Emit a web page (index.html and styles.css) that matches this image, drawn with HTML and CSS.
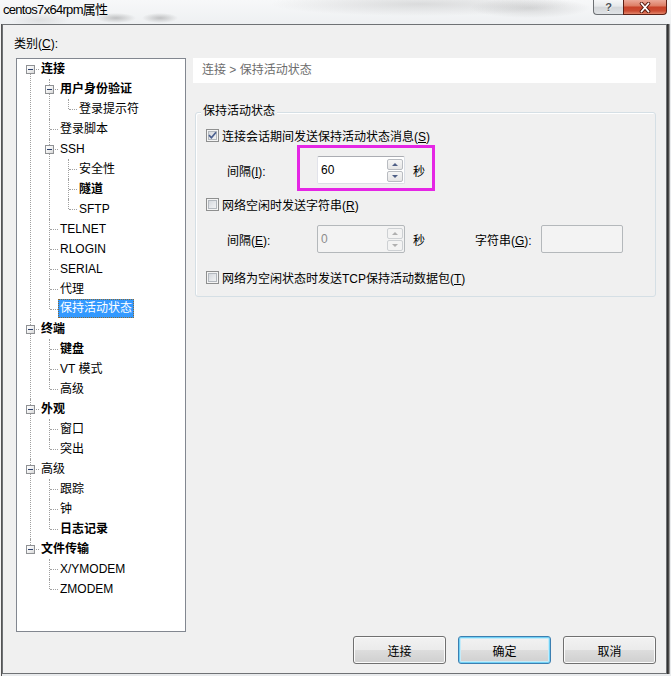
FILE: index.html
```html
<!DOCTYPE html>
<html lang="zh-CN">
<head>
<meta charset="utf-8">
<title>centos7x64rpm属性</title>
<link rel="stylesheet" href="styles.css">
</head>
<body>
<div class="window">
  <div class="titlebar">
    <div class="title">centos7x64rpm属性</div>
    <div class="caption">
      <div class="cap-help">?</div>
      <div class="cap-close">
        <svg width="14" height="11" viewBox="0 0 14 11"><path d="M3.5 1.5 L10.5 9.5 M10.5 1.5 L3.5 9.5" stroke="#5a1d12" stroke-width="3.6" stroke-linecap="round" fill="none"/><path d="M3.5 1.5 L10.5 9.5 M10.5 1.5 L3.5 9.5" stroke="#ffffff" stroke-width="1.8" stroke-linecap="round" fill="none"/></svg>
      </div>
    </div>
  </div>
  <div class="client">
    <div class="cat-label">类别(<u>C</u>):</div>
    <div class="main">
      <div class="tree-box">
        <ul class="tree">
          <li class="first">
            <div class="row"><span class="exp"></span><span class="b">连接</span></div>
            <ul>
              <li>
                <div class="row"><span class="exp"></span><span class="b">用户身份验证</span></div>
                <ul>
                  <li class="last"><div class="row"><span>登录提示符</span></div></li>
                </ul>
              </li>
              <li><div class="row"><span>登录脚本</span></div></li>
              <li>
                <div class="row"><span class="exp"></span><span>SSH</span></div>
                <ul>
                  <li><div class="row"><span>安全性</span></div></li>
                  <li><div class="row"><span class="b">隧道</span></div></li>
                  <li class="last"><div class="row"><span>SFTP</span></div></li>
                </ul>
              </li>
              <li><div class="row"><span>TELNET</span></div></li>
              <li><div class="row"><span>RLOGIN</span></div></li>
              <li><div class="row"><span>SERIAL</span></div></li>
              <li><div class="row"><span>代理</span></div></li>
              <li class="last"><div class="row"><span class="sel">保持活动状态</span></div></li>
            </ul>
          </li>
          <li>
            <div class="row"><span class="exp"></span><span class="b">终端</span></div>
            <ul>
              <li><div class="row"><span class="b">键盘</span></div></li>
              <li><div class="row"><span>VT 模式</span></div></li>
              <li class="last"><div class="row"><span>高级</span></div></li>
            </ul>
          </li>
          <li>
            <div class="row"><span class="exp"></span><span class="b">外观</span></div>
            <ul>
              <li><div class="row"><span>窗口</span></div></li>
              <li class="last"><div class="row"><span>突出</span></div></li>
            </ul>
          </li>
          <li>
            <div class="row"><span class="exp"></span><span>高级</span></div>
            <ul>
              <li><div class="row"><span>跟踪</span></div></li>
              <li><div class="row"><span>钟</span></div></li>
              <li class="last"><div class="row"><span class="b">日志记录</span></div></li>
            </ul>
          </li>
          <li class="last">
            <div class="row"><span class="exp"></span><span class="b">文件传输</span></div>
            <ul>
              <li><div class="row"><span>X/YMODEM</span></div></li>
              <li class="last"><div class="row"><span>ZMODEM</span></div></li>
            </ul>
          </li>
        </ul>
      </div>
      <div class="panel">
        <div class="crumb">连接 &gt; 保持活动状态</div>
        <div class="group">
          <div class="legend">保持活动状态</div>
          <div class="row-cb r1">
            <span class="cb"><svg width="9" height="9" viewBox="0 0 9 9"><path d="M1 4.2 L3.4 6.8 L8 1.3" stroke="#4a5f8f" stroke-width="1.7" fill="none"/></svg></span>
            <span>连接会话期间发送保持活动状态消息(<u>S</u>)</span>
          </div>
          <div class="row-field r2">
            <span class="flabel">间隔(<u>I</u>):</span>
            <div class="spinbox">
              <span class="val">60</span>
              <div class="spin"><span class="sb"><i class="up"></i></span><span class="sb"><i class="down"></i></span></div>
            </div>
            <span class="unit">秒</span>
            <div class="highlight"></div>
          </div>
          <div class="row-cb r3">
            <span class="cb"></span>
            <span>网络空闲时发送字符串(<u>R</u>)</span>
          </div>
          <div class="row-field r4">
            <span class="flabel">间隔(<u>E</u>):</span>
            <div class="spinbox disabled">
              <span class="val">0</span>
              <div class="spin"><span class="sb"><i class="up"></i></span><span class="sb"><i class="down"></i></span></div>
            </div>
            <span class="unit">秒</span>
            <span class="slabel">字符串(<u>G</u>):</span>
            <div class="textbox disabled"></div>
          </div>
          <div class="row-cb r5">
            <span class="cb"></span>
            <span>网络为空闲状态时发送TCP保持活动数据包(<u>T</u>)</span>
          </div>
        </div>
      </div>
    </div>
    <div class="buttons">
      <button class="btn">连接</button>
      <button class="btn default">确定</button>
      <button class="btn">取消</button>
    </div>
  </div>
</div>
</body>
</html>
```

FILE: styles.css
```css
* { box-sizing: border-box; }
html, body { margin: 0; padding: 0; }
body {
  width: 671px;
  height: 676px;
  overflow: hidden;
  font-family: "Liberation Sans", "Noto Sans CJK SC", sans-serif;
  font-size: 12px;
  color: #000;
  background: #e6e8ea;
}
u { text-decoration: underline; text-underline-offset: 1px; }

.window {
  width: 671px;
  height: 676px;
  display: flex;
  flex-direction: column;
  background:
    linear-gradient(to right, #f4f4f4 0, #f4f4f4 1px, #555 1px, #555 2px, transparent 2px),
    #e9ebed;
}

.titlebar {
  height: 24px;
  flex: none;
  display: flex;
  align-items: flex-start;
  background:
    radial-gradient(ellipse 20px 5px at 116px 18px, rgba(80,80,80,0.30), transparent),
    radial-gradient(ellipse 18px 5px at 160px 18px, rgba(80,80,80,0.30), transparent),
    radial-gradient(ellipse 30px 7px at 40px 20px, rgba(140,140,140,0.18), transparent),
    radial-gradient(ellipse 150px 12px at 420px 4px, rgba(120,120,120,0.22), transparent),
    radial-gradient(ellipse 60px 10px at 530px 8px, rgba(110,110,110,0.22), transparent),
    linear-gradient(#f7f8f9, #eef0f2);
}
.title {
  margin: 1px 0 0 3px;
  line-height: 18px;
  font-size: 13px;
  letter-spacing: -0.7px;
  color: #000;
}
.caption {
  margin-left: auto;
  margin-right: 4px;
  display: flex;
  height: 15px;
}
.cap-help {
  width: 30px;
  height: 15px;
  border: 1px solid #6d7074;
  border-top: none;
  border-right: none;
  border-radius: 0 0 0 4px;
  background: linear-gradient(#f6f7f8, #e6e8ea 45%, #d3d6d9 50%, #e0e3e6);
  display: flex;
  justify-content: center;
  align-items: center;
  font: bold 11px "Liberation Sans", sans-serif;
  color: #4e5257;
  text-shadow: 0 1px 0 #fff;
}
.cap-close {
  width: 44px;
  height: 15px;
  border: 1px solid #5d1f14;
  border-top: none;
  border-radius: 0 0 4px 0;
  background: linear-gradient(#eba999, #de8068 40%, #c8432a 52%, #cc4c32 78%, #e2866b);
  display: flex;
  justify-content: center;
  align-items: center;
}

.client {
  flex: none;
  height: 650px;
  margin: 0 4px 2px 2px;
  border: 1px solid #6f7275;
  background: #f0f0f0;
  padding: 9px 10px 9px 0;
  display: flex;
  flex-direction: column;
  box-shadow: 1px 0 0 #333, 2px 0 0 #4a4a4a, 3px 0 0 #9a9a9a;
}
.cat-label {
  margin-left: 11px;
  line-height: 20px;
  height: 20px;
  margin-bottom: 4px;
}
.main {
  display: flex;
  height: 574px;
  margin-left: 13px;
}

.tree-box {
  width: 170px;
  height: 574px;
  flex: none;
  border: 1px solid #828790;
  background: #fff;
  overflow: hidden;
}
.tree, .tree ul { list-style: none; margin: 0; padding: 0; }
.tree ul { padding-left: 19px; }
.tree li { position: relative; }
.tree li::before {
  content: "";
  position: absolute;
  left: 13px;
  top: 0;
  bottom: 0;
  border-left: 1px dotted #a0a0a0;
}
.tree li.last::before { bottom: auto; height: 10px; }
.tree > li.first::before { top: 10px; }
.tree li::after {
  content: "";
  position: absolute;
  left: 14px;
  top: 10px;
  width: 8px;
  border-top: 1px dotted #a0a0a0;
}
.row {
  position: relative;
  height: 20px;
  display: flex;
  align-items: center;
  padding-left: 24px;
  white-space: nowrap;
  line-height: 18px;
}
.b { font-weight: bold; }
.exp {
  position: absolute;
  left: 9px;
  top: 6px;
  width: 9px;
  height: 9px;
  border: 1px solid #8f9194;
  background: linear-gradient(135deg, #ffffff 0%, #f1f1f1 50%, #d6d6d6 100%);
  z-index: 1;
}
.exp::after {
  content: "";
  position: absolute;
  left: 1px;
  top: 3px;
  width: 5px;
  height: 1px;
  background: #2b3f6c;
}
.sel {
  align-self: flex-start;
  height: 19px;
  line-height: 17px;
  margin-left: -2px;
  padding: 0 1px;
  background: #3399ff;
  color: #fff;
  border: 1px dotted #8a6a35;
}

.panel {
  width: 463px;
  margin-left: 7px;
  display: flex;
  flex-direction: column;
}
.crumb {
  height: 25px;
  line-height: 25px;
  background: #fff;
  color: #6d6d6d;
  padding-left: 9px;
}
.group {
  margin-top: 29px;
  margin-left: 2px;
  border: 1px solid #d5dfe5;
  border-radius: 3px;
  padding: 0 0 9px 10px;
  display: flex;
  flex-direction: column;
  box-shadow: inset 1px 1px 0 #fff;
}
.legend {
  align-self: flex-start;
  margin: -10px 0 0 -5px;
  padding: 0 2px;
  height: 16px;
  line-height: 16px;
  background: #f0f0f0;
}
.row-cb {
  height: 20px;
  display: flex;
  align-items: center;
  gap: 3px;
  white-space: nowrap;
}
.r1 { margin-top: 6px; }
.r3 { margin-top: 9px; }
.r5 { margin-top: 13px; }
.cb {
  width: 13px;
  height: 13px;
  flex: none;
  border: 1px solid #8e8f8f;
  background: linear-gradient(135deg, #cdd1d7 0%, #e6e8eb 55%, #f7f7f7 100%);
  box-shadow: inset 0 0 0 1px #f4f4f4, inset 0 0 0 2px #b3b8be;
  display: flex;
  align-items: center;
  justify-content: center;
}
.cb svg { display: block; }

.row-field {
  position: relative;
  height: 30px;
  display: flex;
  align-items: center;
  padding-left: 21px;
  white-space: nowrap;
}
.r2 { margin-top: 10px; }
.r4 { margin-top: 10px; }
.flabel { width: 90px; flex: none; }
.spinbox {
  width: 88px;
  height: 28px;
  flex: none;
  display: flex;
  background: #fff;
  border: 1px solid #dbdfe6;
  border-top-color: #abadb3;
  border-left-color: #e2e3ea;
  border-radius: 2px;
}
.spinbox .val {
  flex: 1;
  padding-left: 3px;
  line-height: 26px;
}
.spin {
  width: 17px;
  flex: none;
  display: flex;
  flex-direction: column;
  gap: 1px;
  padding: 2px 1px 1px 0;
}
.sb {
  height: 11px;
  border: 1px solid #b9bcc1;
  border-radius: 2px;
  background: linear-gradient(#f6f6f6, #e6e6e6);
  display: flex;
  align-items: center;
  justify-content: center;
}
.sb i { display: block; width: 0; height: 0; border-left: 3px solid transparent; border-right: 3px solid transparent; }
.sb i.up { border-bottom: 3px solid #4f5f86; }
.sb i.down { border-top: 3px solid #4f5f86; }
.spinbox.disabled {
  background: #f3f3f3;
  border-color: #b4b8bb;
}
.spinbox.disabled .val { color: #8c8c8c; }
.spinbox.disabled .sb { border-color: #cdd0d3; background: #f3f3f3; }
.spinbox.disabled .sb i.up { border-bottom-color: #b0b0b0; }
.spinbox.disabled .sb i.down { border-top-color: #b0b0b0; }
.unit { margin-left: 8px; }
.slabel { margin-left: 50px; width: 66px; flex: none; }
.textbox {
  width: 82px;
  height: 28px;
  flex: none;
  border: 1px solid #b4b8bb;
  border-radius: 2px;
  background: #f3f3f3;
}
.highlight {
  position: absolute;
  left: 91px;
  top: -10px;
  width: 138px;
  height: 46px;
  border: 3px solid #e526e5;
}

.buttons {
  margin-top: 4px;
  height: 28px;
  display: flex;
  justify-content: flex-end;
  gap: 12px;
}
.btn {
  width: 93px;
  height: 28px;
  padding: 0;
  border: 1px solid #707070;
  border-radius: 3px;
  background: linear-gradient(#f2f2f2 0%, #ebebeb 49%, #dddddd 50%, #cfcfcf 100%);
  box-shadow: inset 0 0 0 1px #fbfbfb;
  font-family: "Liberation Sans", "Noto Sans CJK SC", sans-serif;
  font-size: 12px;
  color: #000;
  display: flex;
  align-items: center;
  justify-content: center;
}
.btn.default {
  border-color: #3c7fb1;
  box-shadow: inset 0 0 0 1px #72d1f5, inset 0 0 0 2px #c5ebf9;
}
```
